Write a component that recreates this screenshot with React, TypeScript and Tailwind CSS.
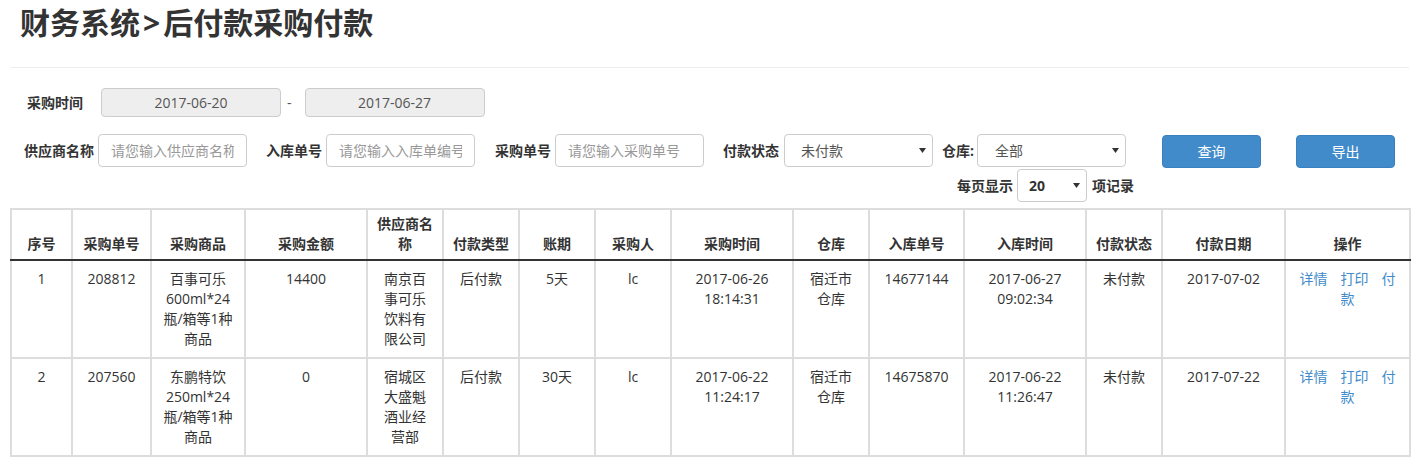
import React from 'react';

type Row = {
  no: string;
  orderNo: string;
  goods: string;
  amount: string;
  supplier: string;
  payType: string;
  term: string;
  buyer: string;
  buyTime: string;
  warehouse: string;
  stockNo: string;
  stockTime: string;
  status: string;
  payDate: string;
};

const rows: Row[] = [
  {
    no: '1',
    orderNo: '208812',
    goods: '百事可乐600ml*24瓶/箱等1种商品',
    amount: '14400',
    supplier: '南京百事可乐饮料有限公司',
    payType: '后付款',
    term: '5天',
    buyer: 'lc',
    buyTime: '2017-06-26 18:14:31',
    warehouse: '宿迁市仓库',
    stockNo: '14677144',
    stockTime: '2017-06-27 09:02:34',
    status: '未付款',
    payDate: '2017-07-02',
  },
  {
    no: '2',
    orderNo: '207560',
    goods: '东鹏特饮250ml*24瓶/箱等1种商品',
    amount: '0',
    supplier: '宿城区大盛魁酒业经营部',
    payType: '后付款',
    term: '30天',
    buyer: 'lc',
    buyTime: '2017-06-22 11:24:17',
    warehouse: '宿迁市仓库',
    stockNo: '14675870',
    stockTime: '2017-06-22 11:26:47',
    status: '未付款',
    payDate: '2017-07-22',
  },
];

const colWidths = [61, 79, 94, 122, 76, 76, 76, 76, 122, 76, 95, 122, 76, 123, 125];
const headers = [
  '序号',
  '采购单号',
  '采购商品',
  '采购金额',
  '供应商名称',
  '付款类型',
  '账期',
  '采购人',
  '采购时间',
  '仓库',
  '入库单号',
  '入库时间',
  '付款状态',
  '付款日期',
  '操作',
];

const inputCls =
  'h-[33px] w-[149px] rounded-[4px] border border-[#ccc] bg-white px-[12px] text-[14px] text-[#555] outline-none placeholder:text-[#999]';
const labelCls = 'font-bold text-[14px] text-[#333] whitespace-nowrap';
const th =
  'border-2 border-[#ddd] border-b-2 border-b-[#333] px-2 pt-[4px] pb-[5px] align-bottom text-center font-bold leading-[20px]';
const td = 'border-2 border-[#ddd] px-2 pt-[8px] pb-[8px] align-top text-center leading-[20px]';

function Caret() {
  return (
    <svg width="7" height="5" viewBox="0 0 7 5" aria-hidden>
      <polygon points="0,0 7,0 3.5,5" fill="#333" />
    </svg>
  );
}

function FakeSelect({ value, className, bold }: { value: string; className: string; bold?: boolean }) {
  return (
    <div
      className={`flex h-[33px] items-center justify-between rounded-[4px] border border-[#ccc] bg-white pr-[6px] ${className}`}
    >
      <span className={bold ? 'font-bold text-[#333]' : 'text-[#555]'}>{value}</span>
      <Caret />
    </div>
  );
}

export default function App() {
  return (
    <div className="min-h-screen bg-white font-['Open_Sans','Noto_Sans_CJK_SC',sans-serif] text-[14px] text-[#333]">
      <div className="pl-[10px] pr-[4px]">
        <h1 className="pl-[10px] pt-[6px] text-[30px] font-bold leading-[33px] text-[#333]">
          财务系统<span className="mx-[3px]">&gt;</span>后付款采购付款
        </h1>
        <div className="mt-[28px] border-t border-[#eee]" />

        {/* 采购时间 */}
        <div className="mt-[20px] flex h-[29px] items-center">
          <span className={`${labelCls} ml-[17px]`}>采购时间</span>
          <input
            readOnly
            value="2017-06-20"
            className="ml-[18px] h-[29px] w-[180px] rounded-[4px] border border-[#ccc] bg-[#eee] text-center text-[14px] text-[#555] outline-none"
          />
          <span className="ml-[6px] text-[#555]">-</span>
          <input
            readOnly
            value="2017-06-27"
            className="ml-[13px] h-[29px] w-[180px] rounded-[4px] border border-[#ccc] bg-[#eee] text-center text-[14px] text-[#555] outline-none"
          />
        </div>

        {/* 条件 */}
        <div className="mt-[17px] flex h-[33px] items-center">
          <span className={`${labelCls} ml-[14px]`}>供应商名称</span>
          <input className={`${inputCls} ml-[4px]`} placeholder="请您输入供应商名称" />
          <span className={`${labelCls} ml-[19px]`}>入库单号</span>
          <input className={`${inputCls} ml-[4px]`} placeholder="请您输入入库单编号" />
          <span className={`${labelCls} ml-[20px]`}>采购单号</span>
          <input className={`${inputCls} ml-[4px]`} placeholder="请您输入采购单号" />
          <span className={`${labelCls} ml-[19px]`}>付款状态</span>
          <FakeSelect value="未付款" className="ml-[5px] w-[149px] pl-[16px]" />
          <span className={`${labelCls} ml-[9px]`}>仓库:</span>
          <FakeSelect value="全部" className="ml-[3px] w-[149px] pl-[17px]" />
          <button className="ml-[36px] mt-[2px] h-[33px] w-[99px] rounded-[4px] border border-[#3a80bf] bg-[#428bca] text-white">
            查询
          </button>
          <button className="ml-[35px] mt-[2px] h-[33px] w-[99px] rounded-[4px] border border-[#3a80bf] bg-[#428bca] text-white">
            导出
          </button>
        </div>

        {/* 分页 */}
        <div className="mt-[2px] ml-[947px] flex h-[33px] items-center">
          <span className={labelCls}>每页显示</span>
          <FakeSelect value="20" bold className="ml-[4px] w-[70px] pl-[11px]" />
          <span className={`${labelCls} ml-[5px]`}>项记录</span>
        </div>

        <table className="mt-[6px] w-[1399px] table-fixed border-collapse">
          <colgroup>
            {colWidths.map((w, i) => (
              <col key={i} style={{ width: w }} />
            ))}
          </colgroup>
          <thead>
            <tr>
              {headers.map((h) => (
                <th key={h} className={th}>
                  {h}
                </th>
              ))}
            </tr>
          </thead>
          <tbody>
            {rows.map((r) => (
              <tr key={r.no}>
                <td className={td}>{r.no}</td>
                <td className={td}>{r.orderNo}</td>
                <td className={td}>{r.goods}</td>
                <td className={td}>{r.amount}</td>
                <td className={`${td} !px-[11px]`}>{r.supplier}</td>
                <td className={td}>{r.payType}</td>
                <td className={td}>{r.term}</td>
                <td className={td}>{r.buyer}</td>
                <td className={td}>{r.buyTime}</td>
                <td className={`${td} !px-[11px]`}>{r.warehouse}</td>
                <td className={td}>{r.stockNo}</td>
                <td className={td}>{r.stockTime}</td>
                <td className={td}>{r.status}</td>
                <td className={td}>{r.payDate}</td>
                <td className={td}>
                  <a className="mr-[13px] cursor-pointer text-[#428bca]">详情</a>
                  <a className="mr-[13px] cursor-pointer text-[#428bca]">打印</a>
                  <a className="cursor-pointer text-[#428bca]">付款</a>
                </td>
              </tr>
            ))}
          </tbody>
        </table>
      </div>
    </div>
  );
}
